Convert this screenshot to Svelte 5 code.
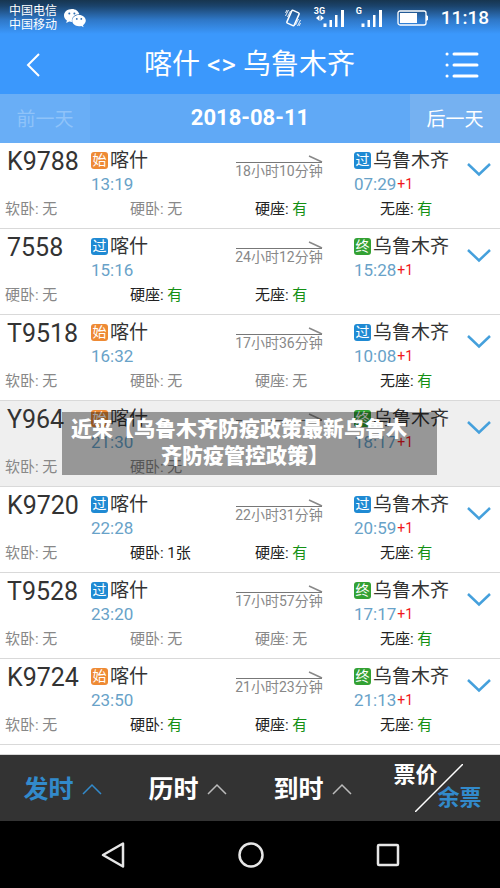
<script>
  const none = '无';
  const some = '有';
  const trains = [
    { no: 'K9788', from: '始', dep: '13:19', span: '18小时10分钟', to: '过', arr: '07:29', seats: [['软卧', none], ['硬卧', none], ['硬座', some], ['无座', some]] },
    { no: '7558', from: '过', dep: '15:16', span: '24小时12分钟', to: '终', arr: '15:28', seats: [['硬卧', none], ['硬座', some], ['无座', some]] },
    { no: 'T9518', from: '始', dep: '16:32', span: '17小时36分钟', to: '过', arr: '10:08', seats: [['软卧', none], ['硬卧', none], ['硬座', none], ['无座', some]] },
    { no: 'Y964', from: '始', dep: '21:30', span: '', to: '终', arr: '18:17', shaded: true, seats: [['软卧', none], ['硬卧', none]] },
    { no: 'K9720', from: '过', dep: '22:28', span: '22小时31分钟', to: '过', arr: '20:59', seats: [['软卧', none], ['硬卧', '1张'], ['硬座', some], ['无座', some]] },
    { no: 'T9528', from: '过', dep: '23:20', span: '17小时57分钟', to: '终', arr: '17:17', seats: [['软卧', none], ['硬卧', none], ['硬座', none], ['无座', some]] },
    { no: 'K9724', from: '始', dep: '23:50', span: '21小时23分钟', to: '终', arr: '21:13', seats: [['软卧', none], ['硬卧', some], ['硬座', some], ['无座', some]] }
  ];
  const kinds = { 始: 'start', 过: 'pass', 终: 'end' };
  const sorts = ['发时', '历时', '到时'];
  let active = $state('发时');
</script>

<div class="app">
  <header class="top">
    <div class="status">
      <div class="carriers"><span>中国电信</span><span>中国移动</span></div>
      <svg class="wechat" width="24" height="20" viewBox="0 0 24 20" aria-hidden="true">
        <path fill="#fff" d="M9 1C4.500 1 1 3.800 1 7.400c0 2 1.100 3.800 2.900 5L3.200 15l3-1.500c.9.200 1.800.4 2.800.4C8.200 9.700 11.600 6.300 16.400 6.300 15.600 3.200 12.600 1 9 1z" />
        <path fill="#fff" d="M16 7c-3.900 0-6.800 2.500-6.800 5.600s2.900 5.700 6.800 5.700c.8 0 1.600-.1 2.300-.3l2.300 1.200-.6-2c1.700-1.100 2.800-2.700 2.800-4.600C22.800 9.500 19.900 7 16 7z" />
        <g fill="#2b6db4"><circle cx="6.300" cy="5.500" r="1" /><circle cx="11.400" cy="5.500" r="1" /><circle cx="13.800" cy="10.900" r=".9" /><circle cx="18.300" cy="10.900" r=".9" /></g>
      </svg>
      <div class="gauges">
        <svg width="18" height="20" viewBox="0 0 18 20" fill="none" stroke="#fff" aria-hidden="true">
          <rect x="5" y="3" width="8" height="14" rx="1" stroke-width="1.500" transform="rotate(24 9 10)" />
          <path d="M1.500 8L4.500 2M3.500 9L6.500 3M1.500 5L3 2M16.500 12l-3 6M14.500 11l-3 6M16.500 15l-1.500 3" stroke-width=".9" />
        </svg>
        <div class="signal">
          <span class="net">3G</span>
          <svg width="30" height="20" viewBox="0 0 30 20" fill="#fff" aria-hidden="true">
            <path d="M1 10l3.500-3v6zM9 10L5.500 7v6z" />
            <path d="M8.500 15.500h3V19h-3zM14.500 12H17v7h-2.500zM20 7h2.500v12H20zM26 2h3v17h-3z" />
          </svg>
        </div>
        <div class="signal second">
          <span class="net">G</span>
          <svg width="26" height="20" viewBox="0 0 26 20" fill="#fff" aria-hidden="true">
            <path d="M4.500 15.500h3V19h-3zM10.500 12H13v7h-2.500zM16 7h2.500v12H16zM22 2h3v17h-3z" />
          </svg>
        </div>
        <svg class="battery" width="32" height="16" viewBox="0 0 32 16" aria-hidden="true">
          <rect x="1" y="1" width="28" height="14" rx="2" fill="none" stroke="#fff" stroke-width="1.300" />
          <path fill="#fff" d="M3 3h17v10H3zM29 5l2 1v4l-2 1z" />
        </svg>
        <time>11:18</time>
      </div>
    </div>
    <div class="title">
      <button aria-label="返回">
        <svg width="14" height="24" viewBox="0 0 14 24" fill="none" stroke="#fff" stroke-width="2"><path d="M13 1L2 12l11 11" /></svg>
      </button>
      <h1>喀什 &lt;&gt; 乌鲁木齐</h1>
      <button aria-label="列表">
        <svg width="34" height="26" viewBox="0 0 34 26" fill="none" stroke="#fff" stroke-width="3" stroke-linecap="round"><path d="M2 2h.1M2 13h.1M2 24h.1M9 2h23M9 13h23M9 24h23" /></svg>
      </button>
    </div>
    <div class="dates">
      <button class="prev" disabled>前一天</button>
      <strong>2018-08-11</strong>
      <button class="next">后一天</button>
    </div>
  </header>

  <main>
    {#each trains as t}
      <article class:shaded={t.shaded}>
        <div class="trip">
          <h2>{t.no}</h2>
          <div class="stop">
            <div class="station"><i class={kinds[t.from]}>{t.from}</i>喀什</div>
            <div class="clock">{t.dep}</div>
          </div>
          <div class="span">
            <svg width="88" height="9" viewBox="0 0 88 9" fill="none" aria-hidden="true">
              <path d="M1 7.500h86" stroke="#777" /><path d="M74 1l13 6" stroke="#888" stroke-width="1.500" />
            </svg>
            <span>{t.span}</span>
          </div>
          <div class="stop arrive">
            <div class="station"><i class={kinds[t.to]}>{t.to}</i>乌鲁木齐</div>
            <div class="clock">{t.arr}<em>+1</em></div>
          </div>
          <button class="more" aria-label="展开 {t.no}">
            <svg width="24" height="14" viewBox="0 0 24 14" fill="none" stroke="#45a0dc" stroke-width="2.500"><path d="M1 1l11 10.500L23 1" /></svg>
          </button>
        </div>
        <div class="seats">
          {#each t.seats as [kind, left]}
            <span class:gone={left === none}>{kind}: <b class:open={left === some}>{left}</b></span>
          {/each}
        </div>
      </article>
    {/each}
    <p class="caption"><span>近来【乌鲁木齐防疫政策最新乌鲁木</span><span class="second-line">齐防疫管控政策】</span></p>
  </main>

  <footer>
    <div class="sorts">
      {#each sorts as s}
        <button class:active={active === s} onclick={() => (active = s)}>
          {s}
          <svg width="20" height="12" viewBox="0 0 20 12" fill="none" stroke="currentColor" stroke-width="1.500"><path d="M1 11l9-9 9 9" /></svg>
        </button>
      {/each}
      <button class="switch">
        <span class="price">票价</span>
        <svg width="48" height="48" viewBox="0 0 48 48" stroke="#fff" stroke-width="1.500" aria-hidden="true"><path d="M0 48L48 0" /></svg>
        <span class="left">余票</span>
      </button>
    </div>
    <nav>
      <button aria-label="后退"><svg width="26" height="28" viewBox="0 0 26 28" fill="none" stroke="#e6e6e6" stroke-width="2.500" stroke-linejoin="round"><path d="M23 2.500v23L3 14z" /></svg></button>
      <button aria-label="主页"><svg width="26" height="26" viewBox="0 0 26 26" fill="none" stroke="#e6e6e6" stroke-width="2.500"><circle cx="13" cy="13" r="11.500" /></svg></button>
      <button aria-label="最近"><svg width="24" height="24" viewBox="0 0 24 24" fill="none" stroke="#e6e6e6" stroke-width="2.500"><rect x="2" y="2" width="20" height="20" rx="1" /></svg></button>
    </nav>
  </footer>
</div>

<style>
  :global(body) { margin: 0; background: #fff; }
  .app {
    display: flex;
    flex-direction: column;
    min-height: 100vh;
    font-family: Roboto, "Noto Sans CJK SC", sans-serif;
    color: #333;
  }
  button {
    display: flex;
    align-items: center;
    justify-content: center;
    padding: 0;
    border: 0;
    background: none;
    color: inherit;
    font: inherit;
  }
  h1, h2, p { margin: 0; font-weight: 400; }
  svg { display: block; flex: none; }

  .top {
    color: #fff;
    background: linear-gradient(#17354f 0, #1b436b 6px, #2f78c8 20px, #3b98fc 34px);
  }
  .status { display: flex; align-items: center; height: 36px; padding: 0 11px 0 9px; }
  .carriers { display: flex; flex-direction: column; font-size: 12px; line-height: 14px; }
  .wechat { margin-left: 6px; }
  .gauges { display: flex; align-items: center; margin-left: auto; }
  .signal { position: relative; margin-left: 13px; }
  .second { margin-left: 12px; }
  .net { position: absolute; top: -2px; left: -1px; font-size: 9px; line-height: 10px; font-weight: 700; }
  .battery { margin-left: 14px; }
  time { margin-left: 12px; font-size: 19px; line-height: 24px; font-weight: 500; }

  .title { display: flex; align-items: center; height: 58px; padding: 0 21px 0 26px; }
  .title h1 { flex: 1; padding-left: 14px; font-size: 28px; line-height: 36px; text-align: center; }

  .dates { display: grid; grid-template-columns: 18% 1fr 18%; height: 49px; background: #60a9f6; font-size: 19px; }
  .dates strong { font-size: 22px; line-height: 48px; font-weight: 700; text-align: center; }
  .dates button { padding-bottom: 3px; }
  .prev { background: #69aef6; color: #8fc3f9; }
  .next { background: #75b1f1; }

  main { position: relative; flex: 1; border-bottom: 1px solid #d9d9d9; }
  article { padding: 4px 0 5px; border-bottom: 1px solid #d9d9d9; }
  .shaded { background: #efefef; }
  .trip { display: grid; grid-template-columns: 91px 137fr 102px 128fr 42px; }
  h2 { padding-left: 7px; font-size: 25px; line-height: 29px; }
  .station { display: flex; align-items: center; gap: 2px; height: 27px; font-size: 19px; line-height: 27px; white-space: nowrap; }
  .station i {
    width: 17px;
    height: 17px;
    border-radius: 3px;
    color: #fff;
    font-size: 14px;
    line-height: 17px;
    font-style: normal;
    text-align: center;
  }
  .start { background: #ee8a34; }
  .pass { background: #1f8ad3; }
  .end { background: #33a133; }
  .clock { font-size: 17px; line-height: 20px; color: #68a2c8; }
  .clock em { margin-left: 1px; font-size: 14px; font-style: normal; color: #f01820; vertical-align: 1px; }
  .arrive { padding-left: 24px; }
  .span { display: flex; flex-direction: column; align-items: center; padding-top: 8px; font-size: 14px; line-height: 14px; color: #888; }
  .more { align-items: flex-start; padding-top: 16px; }
  .seats { display: grid; grid-template-columns: repeat(4, 1fr); margin-top: 2px; font-size: 15px; line-height: 27px; color: #222; }
  .seats span { padding-left: 5px; }
  .seats .gone { color: #888; }
  .seats b { font-weight: 400; }
  .seats .open { color: #149014; }

  .caption {
    position: absolute;
    top: 269px;
    left: 62px;
    right: 63px;
    box-sizing: border-box;
    padding: 4px 30px 5px 9px;
    background: rgba(0, 0, 0, 0.37);
    color: #fff;
    font-size: 21px;
    line-height: 27px;
    font-weight: 900;
    text-align: center;
  }
  .caption span { display: block; }
  .caption .second-line { padding-left: 12px; }

  .sorts { display: grid; grid-template-columns: repeat(4, 1fr); height: 66px; background: #333; color: #fff; font-size: 25px; font-weight: 700; }
  .sorts > button { gap: 8px; padding-bottom: 2px; }
  .sorts > button svg { margin-top: 4px; color: #bbb; }
  .sorts .active, .sorts .active svg { color: #328acb; }
  .sorts > .switch { gap: 0; padding-bottom: 0; font-size: 22px; line-height: 24px; }
  .sorts > .switch svg { margin-top: 0; }
  .price { align-self: flex-start; margin: 8px -23px 0 0; }
  .left { align-self: flex-end; margin: 0 0 11px -25px; color: #328acb; }
  nav { display: flex; align-items: center; justify-content: center; gap: 112px; height: 67px; background: #000; }
</style>
